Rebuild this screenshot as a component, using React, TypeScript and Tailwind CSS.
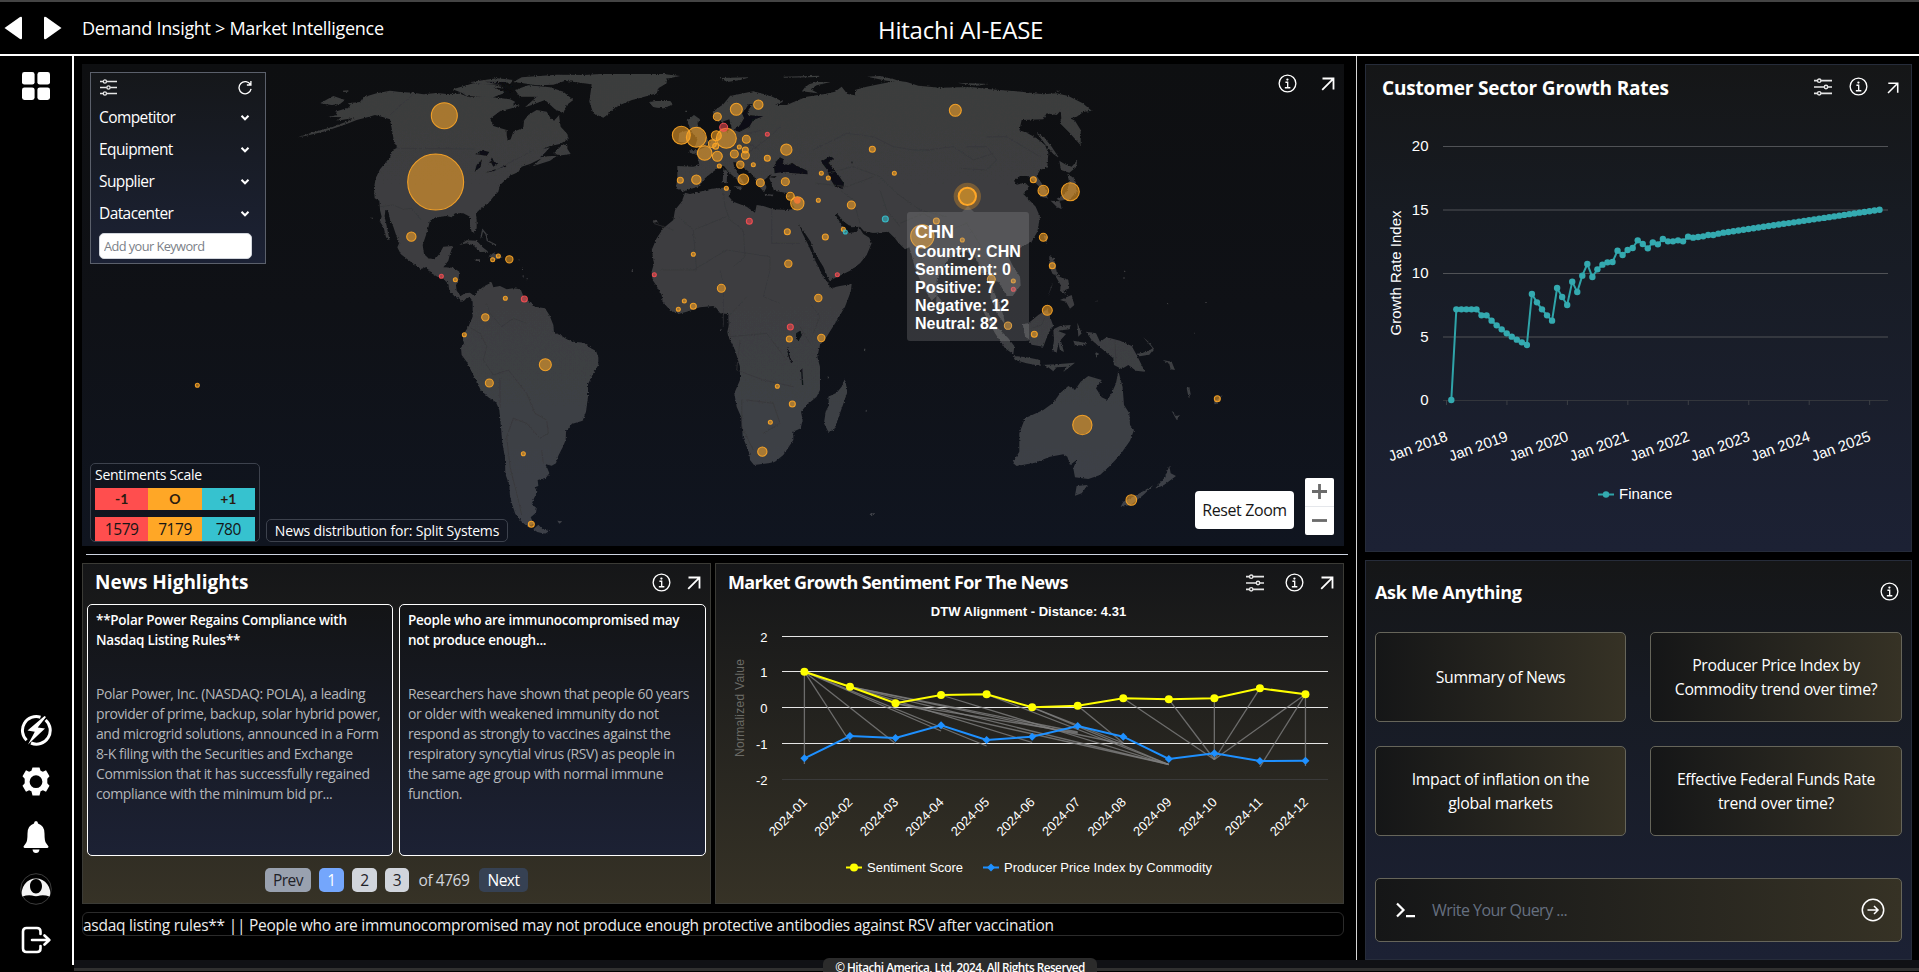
import React from "react";

type IconProps = { className?: string };

const InfoIcon = ({ className = "" }: IconProps) => (
  <svg viewBox="0 0 20 20" className={"shrink-0 " + className} fill="none" stroke="white">
    <circle cx="10" cy="10" r="8.8" strokeWidth="1.4" />
    <circle cx="9.9" cy="5.9" r="1.2" fill="white" stroke="none" />
    <path d="M7.8 8.7h2.4v5.6M7.2 14.5h5.8" strokeWidth="1.4" />
  </svg>
);

const ArrowUpRight = ({ className = "" }: IconProps) => (
  <svg viewBox="0 0 14 14" className={"shrink-0 " + className} fill="none" stroke="white" strokeWidth="1.8">
    <path d="M1.5 1.5H12.5V12.5M12.2 1.8L1.2 12.8" />
  </svg>
);

const SlidersIcon = ({ className = "", mid = 12 }: IconProps & { mid?: number }) => (
  <svg viewBox="0 0 18 18" className={"shrink-0 " + className} fill="none" stroke="#e5e5e5" strokeWidth="1.7">
    <path d={`M0 2.7H3.5M7 2.7H18M0 9H${mid - 1.8}M${mid + 1.8} 9H18M0 15.3H3.5M7 15.3H18`} />
    <circle cx="5.2" cy="2.7" r="1.7" strokeWidth="1.4" />
    <circle cx={mid} cy="9" r="1.7" strokeWidth="1.4" />
    <circle cx="5.2" cy="15.3" r="1.7" strokeWidth="1.4" />
  </svg>
);

const Header = () => (
  <header className="flex h-[56px] shrink-0 items-center border-t-2 border-b-2 border-t-[#444] border-b-white bg-black text-white">
    <div className="flex w-[82px] items-center gap-[22px] pl-1">
      <svg viewBox="0 0 18 24" className="h-6 w-[18px]" fill="white"><path d="M0.5 12L16 1Q18 0 18 2V22Q18 24 16 23Z" /></svg>
      <svg viewBox="0 0 18 24" className="h-6 w-[18px]" fill="white"><path d="M17.5 12L2 1Q0 0 0 2V22Q0 24 2 23Z" /></svg>
    </div>
    <nav className="w-[796px] pt-px text-[18px] tracking-[-0.017em]">Demand Insight &gt; Market Intelligence</nav>
    <h1 className="pt-[3px] text-[24px] tracking-[-0.01em]">Hitachi AI-EASE</h1>
  </header>
);

const Sidebar = () => (
  <aside className="flex h-[909px] w-[74px] shrink-0 flex-col items-center border-r-2 border-white bg-black">
    <svg viewBox="0 0 28 28" className="mt-4 h-7 w-7" fill="white">
      <rect x="0" y="0" width="12.6" height="12.6" rx="2.4" />
      <rect x="15.4" y="0" width="12.6" height="12.6" rx="2.4" />
      <rect x="0" y="15.4" width="12.6" height="12.6" rx="2.4" />
      <rect x="15.4" y="15.4" width="12.6" height="12.6" rx="2.4" />
    </svg>
    <div className="mt-auto flex flex-col items-center pb-[11px]">
      <svg viewBox="0 0 32 32" className="h-8 w-8" fill="none">
        <path d="M20.5 3.2A13.8 13.8 0 0 0 6.6 26.2M11 29A13.8 13.8 0 0 0 25.6 6" stroke="white" strokeWidth="3" />
        <path d="M24.5 2L7.5 16.5L14.8 17.7L8 30.5L25 14.6L17.7 13.5L26 3Z" fill="white" />
      </svg>
      <svg viewBox="0 0 32 32" className="mt-5 h-8 w-8">
        <path
          fill="white"
          fillRule="evenodd"
          d="M12.5 1.5h7l1.1 3.2 2.3 1 3.1-1.4 3.5 6-2.2 2.4v4.6l2.2 2.4-3.5 6-3.1-1.4-2.3 1-1.1 4.2h-7l-1.1-4.2-2.3-1L6 25.7l-3.5-6 2.2-2.4v-4.6L2.5 10.3l3.5-6 3.1 1.4 2.3-1zM16 9.3a6.4 6.4 0 1 0 0 12.8a6.4 6.4 0 0 0 0-12.8z"
        />
      </svg>
      <svg viewBox="0 0 26 32" className="mt-[23px] h-8 w-[26px]" fill="white">
        <path d="M13 0Q15 0 15 2.5Q21.5 4.5 21.5 12.5Q21.5 20 23 22L25.5 25.5Q25.5 27 24 27H2Q.5 27 .5 25.5L3 22Q4.500 20 4.5 12.5Q4.5 4.5 11 2.5Q11 0 13 0zM9.5 28.5h7Q16 32 13 32Q10 32 9.5 28.5z" />
      </svg>
      <svg viewBox="0 0 32 32" className="mt-5 h-8 w-8" fill="none">
        <circle cx="16" cy="16" r="15.3" stroke="#3c3c3c" />
        <path
          fillRule="evenodd"
          d="M2.3 23.5A14.2 14.2 0 1 1 29.7 23.5Q24 21.500 20 22.500Q16 23.800 12 22.500Q8 21.500 2.300 23.500zM16 6C12.500 6 10 9 10 13C10 17.200 12.600 20.500 16 20.500C19.400 20.500 22 17.200 22 13C22 9 19.500 6 16 6z"
          fill="#f4f4f4"
        />
      </svg>
      <svg viewBox="0 0 30 28" className="mt-[21px] h-7 w-[30px]" fill="none" stroke="white" strokeWidth="2.6" strokeLinecap="round" strokeLinejoin="round">
        <path d="M19.5 8V5.5Q19.5 2 16 2H5.5Q2 2 2 5.5V22.5Q2 26 5.5 26H16Q19.5 26 19.5 22.5V20M11 14H28M23.5 9.5L28.3 14L23.5 18.5" />
      </svg>
    </div>
  </aside>
);

const AMERICAS = [
  "M54,262L100,247 160,230 195,217 225,203 180,211 168,211 188,202 145,200 172,195 165,185 205,173 212,166 203,160 240,156 250,142 290,130 330,122 360,126 400,128 430,133 470,129 500,132 540,131 570,142 610,138 650,143 690,148 705,155 700,165 720,166 695,175 660,184 630,206 640,228 680,240 680,255 683,272 692,268 700,245 730,234 732,212 745,195 770,180 800,185 812,205 822,212 837,196 842,230 862,252 866,266 840,282 810,288 788,298 810,292 795,308 780,322 812,318 830,318 810,332 758,349 785,325 750,342 725,350 715,366 690,377 680,386 660,405 655,425 640,440 625,460 600,478 588,490 590,510 590,535 582,548 575,545 570,525 570,500 550,490 525,490 515,502 500,498 470,502 450,512 445,532 438,555 428,585 432,612 445,625 465,628 478,612 490,590 518,588 510,612 505,632 490,652 520,653 538,665 535,690 528,706 530,722 542,738 555,730 570,728 583,738 595,722 610,710 635,697 640,712 660,708 680,718 700,715 722,718 730,738 745,752 765,770 795,775 808,795 820,825 822,848 840,855 868,872 880,875 912,878 930,893 948,903 955,922 955,945 940,970 924,1003 924,1040 918,1085 908,1112 875,1122 858,1145 857,1170 848,1192 835,1217 828,1240 815,1247 795,1242 802,1255 808,1270 798,1283 773,1290 775,1308 764,1312 772,1325 762,1345 755,1362 770,1375 768,1388 752,1402 760,1420 745,1432 722,1412 706,1392 697,1365 690,1338 688,1305 676,1272 675,1222 667,1180 662,1120 658,1080 648,1057 625,1042 602,1020 590,995 575,965 560,935 545,915 543,893 552,880 548,864 553,850 566,828 578,800 578,755 572,745 562,742 552,752 540,756 542,748 525,740 508,722 505,702 488,684 472,680 452,668 440,651 422,657 410,648 385,630 362,612 352,592 358,578 350,560 340,530 330,508 324,480 316,480 314,500 320,528 329,572 318,562 311,532 299,514 305,500 300,480 298,452 284,445 282,415 287,385 300,358 315,340 330,322 338,300 352,293 342,275 336,240 330,208 305,200 285,195 262,202 230,210 190,226 130,245 75,258z",
  "M760,1438L775,1424 788,1438 808,1443 795,1451 772,1446z",
  "M832,1412L847,1414 838,1421z",
  "M820,312L848,283 862,286 862,296 872,312 845,316z",
  "M518,118L560,106 580,100 640,104 668,112 672,130 640,142 600,140 560,138 545,128z",
  "M568,97L650,85 700,90 690,102 620,104z",
  "M725,82L830,74 930,75 1000,76 930,82 870,88 820,104 770,106 730,100 700,96z",
  "M705,120L745,106 810,112 850,125 880,150 860,165 850,190 825,178 795,150 755,165 735,172 770,140 720,140z",
  "M855,92L900,76 960,72 1150,72 1200,78 1160,86 1160,100 1136,114 1130,130 1080,144 1056,150 1020,165 1000,177 980,196 970,203 940,190 928,155 932,125 935,103 900,98z",
  "M1108,157L1130,153 1170,153 1178,163 1150,175 1120,171z",
  "M538,585L560,571 590,572 608,592 625,605 600,606 580,586 560,580z",
  "M625,622L640,609 668,622 645,630z",
  "M583,628L600,628 600,633 588,633z",
  "M120,160L160,138 195,150 180,162 155,165z",
  "M188,122L205,121 205,125 190,126z",
  "M1055,661h4v5h-4zM716,628h4v3h-4zM726,656h3v4h-3zM740,684h3v4h-3zM728,676h3v5h-3zM275,502h4v4h-4z",
];

const AMERICAS_WATER = [
  "M585,313L605,300 628,306 620,318 600,314z",
  "M584,366L590,345 606,328 602,350z",
  "M625,345L636,322 642,335 655,340 640,350 632,335z",
  "M617,368L648,357 646,362z",
  "M652,356L680,345 678,350z",
  "M640,112L690,118 700,128 670,124z",
  "M615,95L680,96 700,110 650,102z",
];

const AFRO_EURASIA = [
  "M135,428L150,432 185,424 215,416 265,412 272,425 265,438 280,455 320,470 345,488 350,465 370,468 400,478 440,480 465,476 472,492 475,515 485,545 505,585 520,620 535,650 550,680 565,700 570,715 600,708 635,702 632,725 615,770 590,812 560,860 540,885 532,920 540,950 540,1020 530,1040 500,1065 483,1085 488,1110 482,1135 460,1145 460,1170 430,1215 405,1235 385,1240 342,1245 330,1230 328,1210 308,1160 305,1105 290,1070 283,1030 300,990 300,950 285,900 265,860 262,845 268,820 265,792 240,790 230,775 220,768 180,772 140,785 115,792 90,780 68,755 65,735 48,705 38,690 35,665 42,640 35,600 50,565 70,535 100,510 105,480 125,455z",
  "M615,985L622,1027 600,1090 582,1140 565,1145 552,1120 557,1085 567,1065 565,1040 590,1028 605,1010z",
  "M465,476L472,515 492,545 512,575 522,605 550,650 568,692 590,682 630,662 660,640 680,615 695,580 688,563 670,552 656,530 650,546 620,550 605,525 585,492 592,492 612,515 635,532 660,530 672,544 700,549 745,545 765,565 775,578 795,598 808,592 815,615 825,655 850,712 875,752 890,737 890,690 910,652 925,630 945,612 975,602 1000,612 1015,640 1025,672 1040,665 1048,700 1052,742 1070,790 1094,822 1092,802 1078,760 1060,722 1056,692 1075,695 1085,712 1100,738 1118,738 1142,706 1140,680 1120,650 1105,620 1130,600 1150,588 1175,575 1192,545 1200,500 1187,470 1165,447 1150,432 1168,410 1155,398 1130,404 1122,392 1140,378 1165,378 1180,392 1198,410 1200,440 1222,444 1224,430 1205,400 1190,378 1200,360 1222,352 1225,310 1215,285 1190,265 1160,248 1138,241 1145,210 1210,208 1220,190 1250,195 1262,182 1264,205 1260,220 1290,250 1322,286 1322,240 1305,212 1290,205 1310,200 1330,186 1355,182 1328,160 1285,138 1250,130 1210,133 1130,124 1050,118 1000,112 960,112 900,113 835,107 800,96 770,92 720,102 680,110 645,120 645,136 622,132 605,110 585,125 550,133 500,140 470,152 440,165 405,165 430,155 390,137 340,124 270,138 250,163 218,185 225,210 245,216 268,208 275,235 262,245 240,232 235,260 215,270 198,290 175,300 148,301 150,308 172,315 178,345 160,350 112,348 112,380 108,415 130,425 140,420 175,410 195,385 215,368 240,350 252,348 265,365 290,388 315,405 300,380 282,350 280,335 295,342 320,360 342,378 350,400 372,427 380,412 370,392 395,372 388,385 395,402 402,422 425,426 440,430 460,428 456,460z",
  "M140,212L162,195 180,208 172,222 190,245 206,275 195,290 165,291 172,268 158,250z",
  "M118,248L150,240 150,262 140,278 115,275z",
  "M890,735L905,752 902,775 888,766z",
  "M280,408L308,410 302,421z",
  "M250,358L262,362 260,400 248,398z",
  "M374,431L400,434 398,439 376,436z",
  "M438,438l14,-3l-6,7z",
  "M486,124L500,105 530,96 572,96 530,106 512,118 534,130z",
  "M240,84L330,82 300,90 262,96z",
  "M430,80L540,77 535,81 432,83z",
  "M682,80L720,78 762,88 790,97 740,92z",
  "M950,98L1045,102 1010,107z",
  "M28,157L50,153 90,153 98,163 70,175 40,171z",
  "M38,515l8,-6l8,7l-14,2zM240,838h5v5h-5zM562,980h5v5h-5zM672,896h4v5h-4zM676,1082l5,-3l-1,7zM688,1392l16,-3l-8,8z",
  "M136,182h5v4h-5z",
];

const AFRO_EURASIA_WATER = [
  "M280,240L300,226 312,205 306,190 318,175 326,163 338,162 325,180 322,195 370,199 340,210 328,230 298,246z",
  "M402,352L408,335 420,322 432,328 428,340 445,345 456,338 466,345 502,362 503,373 460,370 430,366 404,370z",
  "M543,335L570,319 582,325 566,338 575,350 595,375 612,400 610,418 585,410 570,385 562,360z",
  "M468,850L480,842 486,855 476,873 468,865z",
  "M380,380l30,-2l-5,6zM636,332l2,8l-4,0z",
];

const OCEANIA = [
  "M230,248L252,262 275,290 298,325 280,312 255,282z",
  "M298,332L315,343 335,350 352,331 348,352 328,368 303,360z",
  "M322,370L345,388 350,425 330,448 298,452 290,446 318,430 328,400z",
  "M272,452L300,454 305,478 290,470z",
  "M250,555L262,560 260,583z",
  "M268,618L282,624 290,665 300,680 278,672 268,650z",
  "M285,676L325,690 328,715 310,722 318,735 300,722 302,705z",
  "M300,750L335,735 343,765 330,776 318,755z",
  "M278,700L262,742 275,712z",
  "M188,822L205,820 235,795 262,778 270,800 280,828 265,850 250,890 215,884 195,857z",
  "M65,775L85,790 110,830 145,865 163,888 160,913 135,895 105,850z",
  "M158,918L200,922 240,930 242,948 200,940 165,930z",
  "M247,945L300,942 345,938 310,966 320,950 290,952 280,964 265,952z",
  "M280,838L300,828 332,825 328,838 292,842 318,852 302,870 312,906 300,900 295,880 290,908 278,902 282,870z",
  "M352,818L365,850 355,860zM340,872L382,880 372,886 345,886zM405,905l12,6l-8,12z",
  "M378,845L408,850 420,875 440,862 480,872 515,888 530,915 555,965 528,962 505,945 485,957 462,945 460,925 420,892 395,870z",
  "M530,912L562,905 578,895 550,862 566,876 582,896 568,914 538,919z",
  "M608,930L635,935 645,960 632,958 628,942z",
  "M680,1015l8,-4l4,22l-6,10zM635,1083L650,1098 660,1095 650,1110zM762,1058l26,-24l-8,14l-14,18z",
  "M475,963L488,1012 492,1065 508,1090 510,1125 522,1140 510,1172 480,1215 450,1247 420,1275 385,1287 345,1282 340,1255 350,1230 330,1245 322,1220 310,1213 270,1220 225,1238 170,1248 158,1238 178,1205 178,1150 195,1105 250,1080 280,1058 300,1030 325,1008 345,1020 362,995 385,978 425,990 408,1015 425,1042 442,1050 455,1030 468,1000z",
  "M350,1308L383,1305 365,1330 345,1337z",
  "M628,1247L632,1270 648,1278 612,1305 585,1316 615,1282z",
  "M580,1306L550,1335 512,1365 482,1370 490,1355 530,1335z",
  "M490,682h4v4h-4zM492,661h4v5h-4zM410,752h4v3h-4zM621,759h4v4h-4zM735,757h3v4h-3zM703,848h3v3h-3zM288,122l10,0l-4,4z",
];

const BORDERS = [
  "M400,132L330,195M350,295L585,297M300,470L340,465 370,478 395,475 425,512M640,365L760,300M620,760L630,790 665,830 700,805 740,820M565,830L600,850 620,890 610,930 640,975 685,960 740,1030 765,1090 800,1110 805,1150 780,1165 740,1120 700,1105 680,1160 690,1250 710,1330 725,1395M785,1200L790,1240M660,985L660,1070",
  "M1195,500L1240,540 1250,660 1140,660M1330,425L1335,470 1350,510 1390,540 1395,620 1360,650M1475,480L1475,580 1560,580M1240,660L1340,600 1470,620 1470,660 1450,740 1500,760M1400,740L1345,800 1350,860 1460,850 1520,930M1380,870L1370,960 1450,990 1540,1010M1400,1050L1480,1060 1500,1120 1450,1150M1385,1050L1385,1130 1420,1200M1330,830L1330,700 1320,660M1590,760L1620,800 1600,850M1560,830L1590,880M1120,520L1180,540M1240,540L1340,500M1680,420L1720,450 1740,520M1800,420L1820,480 1860,530M1600,300L1700,250 1780,260 1840,290 1900,300 1960,300M1640,370L1720,350 1800,380 1850,430 1920,480 2000,500M1940,300L2020,290 2080,330 2140,310M1860,520L1930,490 2010,540 2060,520 2110,600M1390,320L1470,260 1500,230M1400,250L1450,240M1610,400L1700,410 1780,380M1370,260L1440,300",
  "M20,290L80,290 110,330 80,360 0,355M80,260L140,260 190,290 240,320M465,870L468,945M215,835L245,825 260,790",
];

type Dot = [number, number, number];
type DotGroup = { dx: number; amber: Dot[]; red: Dot[]; teal: Dot[] };

const DOTS: DotGroup[] = [
  {
    dx: 0,
    amber: [[493, 197, 40], [467, 396, 85], [394, 560, 15], [655, 618, 7], [638, 629, 7], [688, 628, 12], [526, 689, 7], [676, 745, 7], [616, 802, 12], [553, 854, 7], [796, 944, 19], [628, 999, 13], [730, 1211, 7], [754, 1423, 10], [-248, 1006, 7]],
    red: [[484, 679, 7], [733, 747, 10]],
    teal: [],
  },
  {
    dx: 1080,
    amber: [[124, 256, 28], [169, 262, 31], [194, 309, 23], [229, 257, 16], [217, 281, 13], [227, 289, 10], [232, 319, 16], [259, 265, 31], [238, 348, 7], [289, 178, 19], [232, 200, 13], [355, 164, 15], [319, 268, 13], [298, 291, 7], [316, 300, 10], [316, 316, 13], [283, 312, 13], [301, 344, 12], [340, 344, 7], [382, 325, 10], [439, 299, 18], [310, 388, 17], [361, 398, 13], [259, 415, 7], [121, 391, 10], [169, 389, 15], [436, 395, 13], [451, 439, 13], [472, 460, 21], [535, 451, 7], [544, 370, 7], [565, 384, 7], [634, 465, 13], [610, 538, 7], [556, 561, 10], [442, 545, 10], [445, 641, 12], [160, 613, 7], [244, 715, 13], [133, 753, 7], [115, 778, 7], [160, 769, 10], [535, 744, 12], [544, 864, 12], [448, 867, 10], [412, 1009, 7], [457, 1062, 10], [391, 1117, 7], [367, 1205, 15], [697, 298, 10], [763, 370, 7], [946, 181, 19], [847, 559, 36], [889, 513, 10], [967, 570, 7], [1054, 688, 13], [1120, 693, 7], [1104, 827, 12], [1183, 853, 10], [1180, 389, 10]],
    red: [[251, 232, 13], [382, 253, 7], [328, 514, 10], [43, 674, 7], [592, 674, 7], [451, 831, 10], [1120, 718, 7]],
    teal: [[736, 507, 10], [616, 546, 7]],
  },
  {
    dx: 2040,
    amber: [[250, 422, 17], [331, 425, 28], [250, 562, 13], [277, 647, 10], [262, 781, 16], [772, 1046, 10], [367, 1125, 30], [514, 1350, 17]],
    red: [],
    teal: [],
  },
];

const Dots = ({ items, color }: { items: Dot[]; color: string }) => (
  <>
    {items.map(([x, y, r], i) => (
      <circle key={i} cx={x} cy={y} r={r - 1} fill={color} fillOpacity="0.55" stroke={color} strokeOpacity="0.9" strokeWidth="3.2" />
    ))}
  </>
);

const WorldMap = () => (
  <svg viewBox="82 64 1262 482" className="absolute inset-0 h-full w-full">
    <defs>
      <linearGradient id="land" gradientUnits="userSpaceOnUse" x1="0" y1="42" x2="0" y2="1488">
        <stop offset="0" stopColor="#3b3c3d" />
        <stop offset="0.5" stopColor="#3d3e41" />
        <stop offset="1" stopColor="#3e4148" />
      </linearGradient>
      <linearGradient id="sea" gradientUnits="userSpaceOnUse" x1="0" y1="42" x2="0" y2="1488">
        <stop offset="0" stopColor="#0e0f11" />
        <stop offset="0.5" stopColor="#0f1116" />
        <stop offset="1" stopColor="#101520" />
      </linearGradient>
      <filter id="coast" x="-5%" y="-5%" width="110%" height="110%">
        <feTurbulence type="fractalNoise" baseFrequency="0.2" numOctaves="2" seed="4" />
        <feDisplacementMap in="SourceGraphic" scale="8" xChannelSelector="R" yChannelSelector="G" />
      </filter>
    </defs>
    <g transform="translate(280 50) scale(0.33333)">
      <g filter="url(#coast)">
        <g fill="url(#land)">
          {AMERICAS.map((d, i) => <path key={i} d={d} />)}
          <path d="M603,562L608,540 618,552 622,572 648,585" fill="none" stroke="#3c3d40" strokeWidth="4" />
        </g>
        <g fill="url(#sea)">{AMERICAS_WATER.map((d, i) => <path key={i} d={d} />)}</g>
        <g transform="translate(1080 0)">
          <g fill="url(#land)">{AFRO_EURASIA.map((d, i) => <path key={i} d={d} />)}</g>
          <g fill="url(#sea)">{AFRO_EURASIA_WATER.map((d, i) => <path key={i} d={d} />)}</g>
          <path d="M443,893L446,915 455,938M485,958L488,1005" fill="none" stroke="#101217" strokeWidth="4" />
        </g>
        <g transform="translate(2040 0)" fill="url(#land)">{OCEANIA.map((d, i) => <path key={i} d={d} />)}</g>
        <g fill="none" stroke="#36373a" strokeWidth="2">
          <path d={BORDERS[0]} />
          <path d={BORDERS[1]} />
          <path d={BORDERS[2]} transform="translate(2040 0)" />
        </g>
      </g>
      {DOTS.map((g) => (
        <g key={g.dx} transform={`translate(${g.dx} 0)`}>
          <Dots items={g.amber} color="#ffa726" />
          <Dots items={g.red} color="#f84e52" />
          <Dots items={g.teal} color="#36c2cf" />
        </g>
      ))}
      <circle cx="1552" cy="451" r="10" fill="#ff7a35" fillOpacity="0.8" />
      <circle cx="2062" cy="439" r="41" fill="#ffa726" fillOpacity="0.3" />
      <circle cx="2062" cy="439" r="26" fill="#b6812c" stroke="#ffa726" strokeWidth="6" />
    </g>
  </svg>
);

const Chevron = () => (
  <svg viewBox="0 0 10 8" className="h-2 w-[10px]" fill="none" stroke="white" strokeWidth="2"><path d="M1.5 1.8L5 5.3L8.5 1.8" /></svg>
);

const FilterPanel = () => (
  <div className="absolute top-2 left-2 flex h-[192px] w-[176px] flex-col border border-[#5b606b] bg-gradient-to-b from-[#15171a] to-[#1c2235] pr-[13px] pl-2 text-white">
    <div className="flex h-[29px] items-center justify-between">
      <SlidersIcon className="ml-px h-[17px] w-[17px]" mid={9} />
      <svg viewBox="0 0 16 16" className="-mr-px h-[15px] w-4" fill="none" stroke="white" strokeWidth="1.4">
        <path d="M13.8 5A6.5 6.5 0 1 0 14.5 9.5M14.3 1V5.3H10" />
      </svg>
    </div>
    {["Competitor", "Equipment", "Supplier", "Datacenter"].map((label) => (
      <div key={label} className="flex h-8 items-center justify-between pr-[2px] text-[15.5px] tracking-[-0.038em]">
        {label}
        <Chevron />
      </div>
    ))}
    <input placeholder="Add your Keyword" className="mt-[3px] h-[26px] w-[153px] rounded-[5px] border border-gray-300 bg-white pl-1 text-[12.8px] tracking-[-0.045em] placeholder-[#7b7f88]" />
  </div>
);

const SentimentScale = () => (
  <div className="flex h-[79px] w-[170px] flex-col rounded-[5px] border border-[#3d424d] px-1 text-white">
    <div className="h-6 text-[14px] tracking-[-0.018em]">Sentiments Scale</div>
    <div className="grid h-[22px] grid-cols-3 text-center font-['Lato'] text-[14px] leading-[22px] font-bold text-[#2a1b10]">
      <span className="bg-[#ff4e4e]">-1</span>
      <span className="bg-[#ffa726]">O</span>
      <span className="bg-[#36c2cf]">+1</span>
    </div>
    <div className="mt-[7px] grid h-6 grid-cols-3 text-center text-[15.5px] leading-6 tracking-[-0.03em] text-[#161616]">
      <span className="bg-[#ff4e4e]">1579</span>
      <span className="bg-[#ffa726]">7179</span>
      <span className="bg-[#36c2cf]">780</span>
    </div>
  </div>
);

const Tooltip = () => (
  <div className="absolute top-[148px] left-[825px] h-[129px] w-[122px] rounded-[3px] bg-[#a0a0a0]/25 pt-[10px] pl-2 font-['Liberation_Sans'] text-[16px] leading-[18px] font-bold tracking-normal text-white">
    <svg viewBox="0 0 12 6" className="absolute -top-[6px] left-[55px] h-[6px] w-3" fill="#a0a0a0" fillOpacity="0.25"><path d="M0 6L6 0L12 6Z" /></svg>
    <div className="h-[21px] text-[18px] leading-[20px]">CHN</div>
    <div>Country: CHN</div>
    <div>Sentiment: 0</div>
    <div>Positive: 7</div>
    <div>Negative: 12</div>
    <div>Neutral: 82</div>
  </div>
);

const MapPanel = () => (
  <section className="relative h-[482px] w-[1262px] overflow-hidden bg-[linear-gradient(to_bottom,#0e0f11,#0f1116_50%,#101520)]">
    <WorldMap />
    <FilterPanel />
    <Tooltip />
    <div className="absolute top-[10px] right-[9px] flex items-center gap-[24px]">
      <InfoIcon className="h-[19px] w-[19px]" />
      <ArrowUpRight className="mt-px h-[14px] w-[14px]" />
    </div>
    <div className="absolute bottom-1 left-2 flex items-end gap-[6px]">
      <SentimentScale />
      <div className="flex h-[23px] w-[242px] items-center justify-center rounded-[5px] border border-[#3d424d] bg-[#10141f] text-[14px] tracking-[-0.013em] text-white">News distribution for: Split Systems</div>
    </div>
    <div className="absolute right-[10px] bottom-[11px] flex items-end gap-[11px]">
      <button className="mb-[6px] h-[38px] w-[99px] rounded bg-white text-[16px] tracking-[-0.025em] text-[#161616]">Reset Zoom</button>
      <div className="flex h-[57px] w-[29px] flex-col divide-y divide-gray-200 rounded-[2px] bg-white">
        {["M8 0V16M0 8H16", "M0 8H16"].map((d) => (
          <span key={d} className="flex flex-1 items-center justify-center pb-[2px]">
            <svg viewBox="0 0 16 16" className="h-[15px] w-[15px]" stroke="#6b6b6b" strokeWidth="3"><path d={d} /></svg>
          </span>
        ))}
      </div>
    </div>
  </section>
);

const NewsCard = ({ title, body, className }: { title: string; body: string[]; className: string }) => (
  <article className={"h-[252px] rounded-[5px] border border-white bg-gradient-to-b from-[#131416] to-[#1c2134] pt-[5px] pl-2 " + className}>
    <h3 className="h-[74px] w-[285px] text-[13.5px] leading-5 font-semibold tracking-[-0.018em] text-white">{title}</h3>
    <p className="text-[14px] leading-5 tracking-[-0.029em] whitespace-nowrap text-[#b4b6ba]">
      {body.map((line) => <span key={line} className="block">{line}</span>)}
    </p>
  </article>
);

const NewsPanel = () => (
  <section className="flex h-[341px] w-[629px] flex-col border border-[#3b3b36] bg-gradient-to-b from-[#151618] to-[#363226]">
    <div className="flex h-10 items-center pr-[9px] pb-[3px] pl-[12px]">
      <h2 className="mr-auto text-[19px] font-bold tracking-[0em] text-white">News Highlights</h2>
      <InfoIcon className="mr-[16px] h-[19px] w-[19px]" />
      <ArrowUpRight className="h-[14px] w-[14px]" />
    </div>
    <div className="flex gap-[6px] px-1">
      <NewsCard
        className="w-[306px]"
        title="**Polar Power Regains Compliance with Nasdaq Listing Rules**"
        body={["Polar Power, Inc. (NASDAQ: POLA), a leading", "provider of prime, backup, solar hybrid power,", "and microgrid solutions, announced in a Form", "8-K filing with the Securities and Exchange", "Commission that it has successfully regained", "compliance with the minimum bid pr..."]}
      />
      <NewsCard
        className="w-[307px]"
        title="People who are immunocompromised may not produce enough..."
        body={["Researchers have shown that people 60 years", "or older with weakened immunity do not", "respond as strongly to vaccines against the", "respiratory syncytial virus (RSV) as people in", "the same age group with normal immune", "function."]}
      />
    </div>
    <div className="mt-3 flex h-6 items-center gap-2 pl-[182px] text-[15.5px] leading-6 tracking-[-0.03em] text-[#1f2228]">
      <span className="w-[46px] rounded-[5px] bg-gray-400 text-center">Prev</span>
      <span className="w-[25px] rounded-[5px] bg-[#74a6fc] text-center text-white">1</span>
      <span className="w-[25px] rounded-[5px] bg-gray-300 text-center">2</span>
      <span className="w-6 rounded-[5px] bg-gray-300 text-center">3</span>
      <span className="w-[54px] text-center whitespace-nowrap text-gray-300">of 4769</span>
      <span className="w-[49px] rounded-[5px] bg-gray-700 text-center text-white">Next</span>
    </div>
  </section>
);

const MONTH_X = Array.from({ length: 12 }, (_, i) => 89.4 + i * 45.55);
const SENTIMENT_Y = [108.7, 123.7, 140.3, 132, 131.3, 144.3, 142.7, 135.3, 136.3, 135.3, 125.3, 131.3];
const PPI_Y = [195.3, 173, 175, 162.3, 177, 173.7, 163, 173.7, 196, 190.3, 198, 197.7];
const LINKS: [number, number, number][] = [
  [0, 0, 201], [0, 1, 179], [0, 2, 180.5], [0, 3, 168], [0, 4, 183], [1, 5, 179.5], [1, 6, 169], [1, 7, 181],
  [1, 8, 201.5], [2, 8, 201.5], [2, 6, 170], [3, 8, 201.5], [4, 8, 201.5], [5, 8, 201.5], [5, 7, 180], [6, 7, 180],
  [7, 9, 196.5], [8, 9, 196.5], [9, 9, 196.5], [10, 9, 196.5], [11, 9, 196.5], [11, 10, 204], [11, 11, 203],
];
const toPoints = (xs: number[], ys: number[]) => xs.map((x, i) => `${x},${ys[i]}`).join(" ");

const SentimentChart = () => (
  <svg viewBox="0 0 629 341" className="absolute -inset-px h-[341px] w-[629px] font-['Liberation_Sans'] text-[13px]" fill="white">
    <text x="313.5" y="52.5" textAnchor="middle" fontWeight="bold">DTW Alignment - Distance: 4.31</text>
    {[["2", 73.5], ["1", 108.5], ["0", 144.5], ["-1", 180.5], ["-2", 216.5]].map(([label, y], i) => (
      <g key={label}>
        <line x1="67" x2="613" y1={y} y2={y} stroke={i === 4 ? "#3a3a3a" : "#e6e6e6"} />
        <text x="52.5" y={Number(y) + 5} textAnchor="end">{label}</text>
      </g>
    ))}
    <text transform="translate(29 145) rotate(-90)" textAnchor="middle" fill="#6b6b66" fontSize="12" textLength="98">Normalized Value</text>
    <g stroke="#808080" strokeOpacity="0.8" strokeWidth="1.3">
      {LINKS.map(([a, b, y], i) => <line key={i} x1={MONTH_X[a]} y1={SENTIMENT_Y[a]} x2={MONTH_X[b]} y2={y} />)}
    </g>
    <polyline points={toPoints(MONTH_X, SENTIMENT_Y)} fill="none" stroke="#ffff00" strokeWidth="2" />
    <polyline points={toPoints(MONTH_X, PPI_Y)} fill="none" stroke="#1e90ff" strokeWidth="2" />
    {MONTH_X.map((x, i) => (
      <g key={i}>
        <circle cx={x} cy={SENTIMENT_Y[i]} r="4" fill="#ffff00" />
        <path d={`M${x} ${PPI_Y[i] - 4}l4 4l-4 4l-4 -4z`} fill="#1e90ff" />
        <text transform={`translate(${x + 3.5} 240) rotate(-45)`} textAnchor="end">{`2024-${String(i + 1).padStart(2, "0")}`}</text>
      </g>
    ))}
    <path d="M131 304.5h16" stroke="#ffff00" strokeWidth="2" />
    <circle cx="139" cy="304.5" r="4" fill="#ffff00" />
    <text x="152" y="308.5">Sentiment Score</text>
    <path d="M268 304.5h16" stroke="#1e90ff" strokeWidth="2" />
    <path d="M276 300.5l4 4l-4 4l-4 -4z" fill="#1e90ff" />
    <text x="289" y="308.5">Producer Price Index by Commodity</text>
  </svg>
);

const MarketPanel = () => (
  <section className="relative h-[341px] w-[629px] border border-[#3b3b36] bg-gradient-to-b from-[#151618] to-[#363226]">
    <div className="flex h-10 items-center pr-[9px] pb-[3px] pl-[12px]">
      <h2 className="mr-auto text-[18px] font-bold tracking-[-0.034em] text-white">Market Growth Sentiment For The News</h2>
      <SlidersIcon className="mr-[21px] h-[18px] w-[18px]" />
      <InfoIcon className="mr-[16px] h-[19px] w-[19px]" />
      <ArrowUpRight className="h-[14px] w-[14px]" />
    </div>
    <SentimentChart />
  </section>
);

const GROWTH = [
  1050, 778, 778, 778, 778, 778, 796, 796, 812, 826, 838, 850, 860, 869, 877, 885, 732, 757, 778, 796, 812, 714, 741, 765, 695, 726, 677, 642,
  681, 658, 644, 637, 636, 602, 615, 600, 594, 571, 582, 595, 577, 583, 567, 574, 574, 571, 574, 560, 563, 561, 559, 555, 555, 551, 548,
  ...Array.from({ length: 31 }, (_, i) => 546 - i * 2.23),
].map((v) => v / 3 - 14);
const GROWTH_X = GROWTH.map((_, i) => 86.3 + i * 5.038);

const GrowthChart = () => (
  <svg viewBox="0 0 547 488" className="absolute -inset-px h-[488px] w-[547px] font-['Liberation_Sans'] text-[15px]" fill="white">
    {[20, 15, 10, 5, 0].map((v, i) => (
      <g key={v}>
        <line x1="78" x2="523" y1={82.5 + i * 63.5} y2={82.5 + i * 63.5} stroke={v === 0 ? "#33363c" : "#505256"} />
        <text x="63.5" y={87 + i * 63.5} textAnchor="end">{v}</text>
      </g>
    ))}
    <text transform="translate(36 209) rotate(-90)" textAnchor="middle">Growth Rate Index</text>
    {[2018, 2019, 2020, 2021, 2022, 2023, 2024, 2025].map((year, i) => (
      <g key={year}>
        <path d={`M${81.5 + i * 60.45} 336v5`} stroke="#3c3f45" />
        <text transform={`translate(${83.5 + i * 60.45} 376.5) rotate(-20)`} textAnchor="end">{`Jan ${year}`}</text>
      </g>
    ))}
    <polyline points={toPoints(GROWTH_X, GROWTH)} fill="none" stroke="#2fa4a9" strokeWidth="2" />
    {GROWTH_X.map((x, i) => <circle key={i} cx={x} cy={GROWTH[i]} r="3.2" fill="#34aab0" />)}
    <path d="M233 430.5h16" stroke="#2fa4a9" strokeWidth="2" />
    <circle cx="241" cy="430.5" r="3.2" fill="#34aab0" />
    <text x="254" y="434.5">Finance</text>
  </svg>
);

const GrowthPanel = () => (
  <section className="relative h-[488px] w-[547px] border border-[#262c3a] bg-[linear-gradient(to_bottom,#151617,#171b22_30%,#1c2134)]">
    <div className="flex h-[43px] items-center pr-[12px] pl-[16px]">
      <h2 className="mt-[3px] mr-auto text-[19px] font-bold tracking-[-0.009em] text-white">Customer Sector Growth Rates</h2>
      <SlidersIcon className="mr-[17px] h-[18px] w-[18px]" />
      <InfoIcon className="mr-[19px] h-[19px] w-[19px]" />
      <ArrowUpRight className="mt-[2px] h-[12px] w-[12px]" />
    </div>
    <GrowthChart />
  </section>
);

const QUESTIONS = [["Summary of News"], ["Producer Price Index by", "Commodity trend over time?"], ["Impact of inflation on the", "global markets"], ["Effective Federal Funds Rate", "trend over time?"]];

const AskPanel = () => (
  <section className="flex h-[400px] w-[547px] flex-col border border-[#262c3a] bg-[linear-gradient(to_bottom,#151617,#171b24_35%,#1c2134)] px-[9px]">
    <div className="flex h-[71px] items-center justify-between pr-[3px] pb-[10px]">
      <h2 className="mt-[2px] text-[18px] font-bold tracking-[-0.017em] text-white">Ask Me Anything</h2>
      <InfoIcon className="h-[19px] w-[19px]" />
    </div>
    <div className="grid grid-cols-[251px_252px] gap-x-6 gap-y-6">
      {QUESTIONS.map((lines) => (
        <button key={lines[0]} className="h-[90px] rounded-[5px] border border-[#66655a] bg-gradient-to-r from-[#151617] to-[#363225] text-[15.8px] leading-6 tracking-[-0.02em] text-white">
          {lines.map((l) => <span key={l} className="block">{l}</span>)}
        </button>
      ))}
    </div>
    <div className="mt-[42px] flex h-16 items-center rounded-[5px] border border-[#66655a] bg-gradient-to-r from-[#151617] to-[#363225] pr-[16px] pl-[20px]">
      <svg viewBox="0 0 20 16" className="h-4 w-5" fill="none" stroke="white" strokeWidth="2.2"><path d="M1 1.5L7.5 8L1 14.5M10 14.2H19" /></svg>
      <span className="mr-auto ml-[16px] text-[16px] tracking-[-0.033em] text-[#667080]">Write Your Query ...</span>
      <svg viewBox="0 0 24 24" className="h-6 w-6" fill="none" stroke="white" strokeWidth="1.5"><circle cx="12" cy="12" r="10.7" /><path d="M6.5 12H17M13 8L17 12L13 16" /></svg>
    </div>
  </section>
);

export default function App() {
  return (
    <div className="flex h-[972px] w-[1919px] flex-col overflow-hidden bg-black font-['Open_Sans','Noto_Sans',sans-serif]">
      <Header />
      <div className="flex h-[904px]">
        <Sidebar />
        <main className="flex w-[1282px] shrink-0 flex-col pl-2">
          <div className="pt-2"><MapPanel /></div>
          <div className="mt-2 ml-1 h-px w-[1262px] bg-[#cdd3e0]" />
          <div className="mt-2 flex gap-1">
            <NewsPanel />
            <MarketPanel />
          </div>
          <div className="mt-2 flex h-6 w-[1262px] items-center overflow-hidden rounded-md border border-[#2b2b2b] pt-[3px] text-[15.5px] tracking-[-0.016em] whitespace-nowrap text-[#ececec]">
            asdaq listing rules** || People who are immunocompromised may not produce enough protective antibodies against RSV after vaccination
          </div>
        </main>
        <div className="flex h-[904px] flex-col gap-2 border-l border-[#d5d5d5] pt-2 pl-2">
          <GrowthPanel />
          <AskPanel />
        </div>
      </div>
      <footer className="relative ml-[74px] h-3 shrink-0 border-b border-black bg-[#101115]">
        <div className="mt-2 h-[3px] bg-[#303030]" />
        <div className="absolute -top-[2px] left-[749px] h-[14px] w-[274px] overflow-hidden rounded-t-md bg-[#2b2b2b] text-center text-[11.8px] leading-[18px] font-semibold tracking-[-0.045em] text-white">
          © Hitachi America, Ltd. 2024. All Rights Reserved
        </div>
      </footer>
    </div>
  );
}
